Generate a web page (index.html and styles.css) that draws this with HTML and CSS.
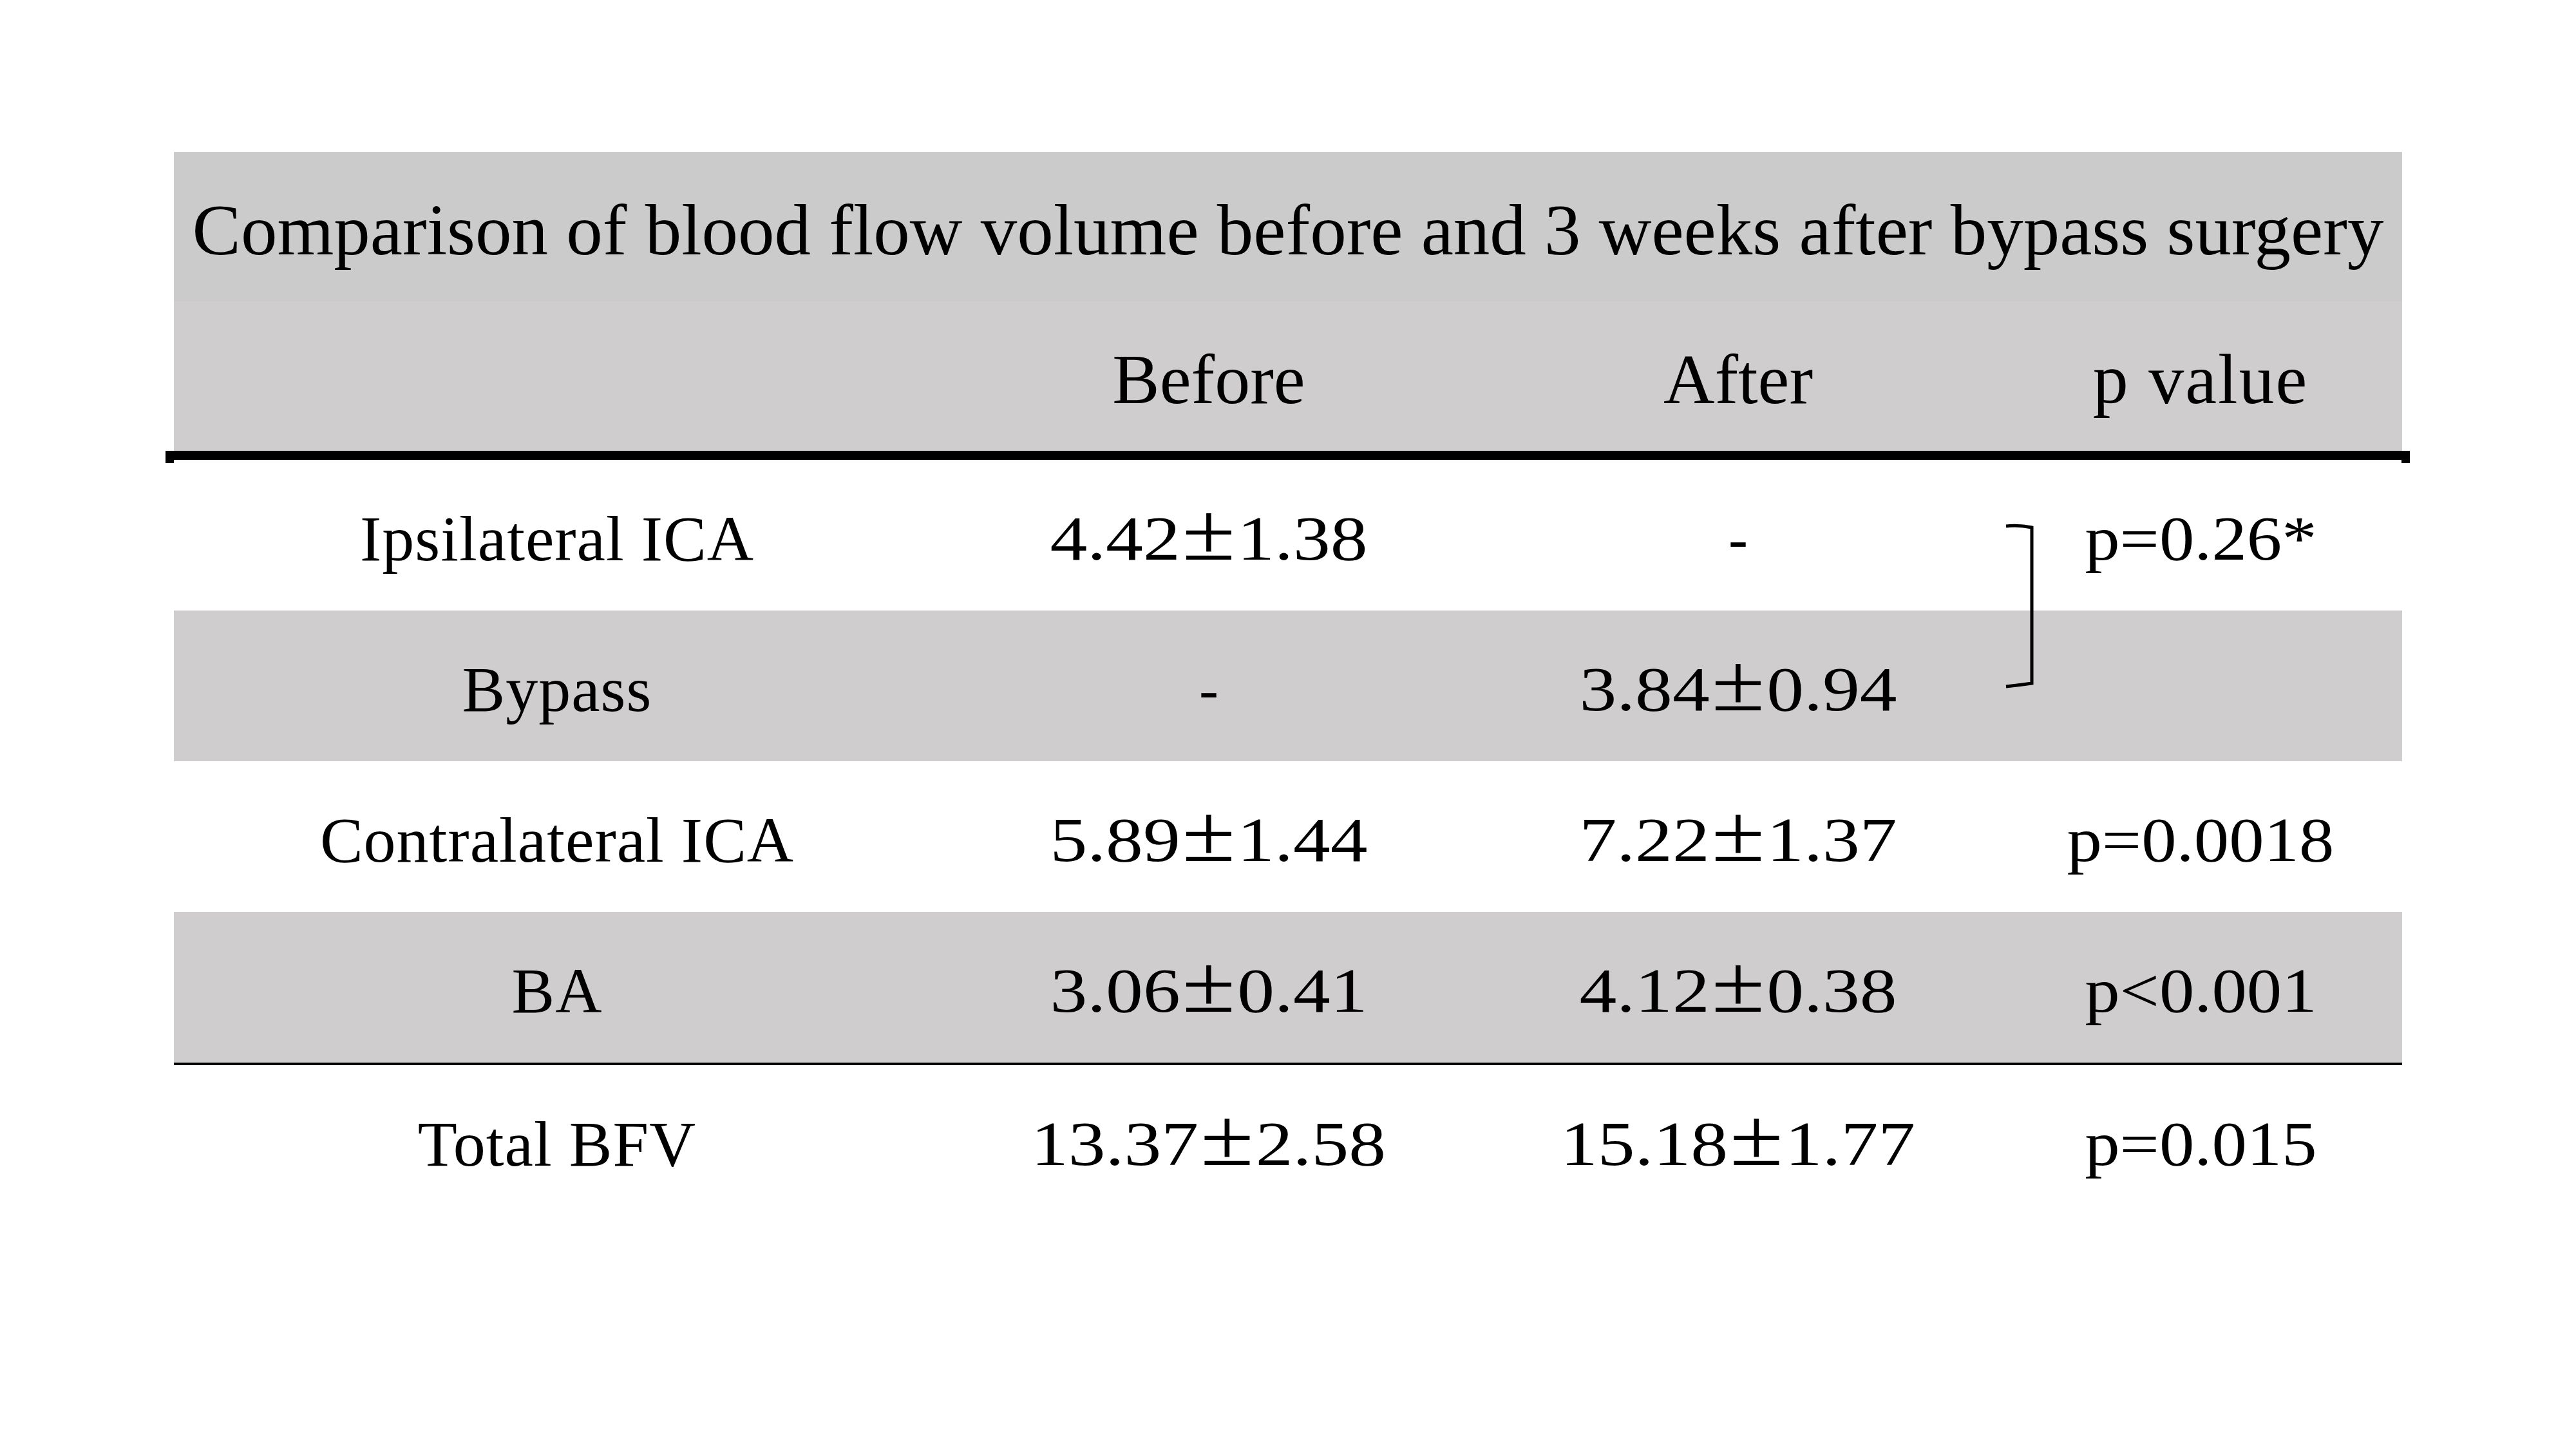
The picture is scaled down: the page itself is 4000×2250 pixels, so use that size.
FILE: index.html
```html
<!DOCTYPE html>
<html lang="en">
<head>
<meta charset="utf-8">
<title>Comparison of blood flow volume</title>
<link rel="stylesheet" href="styles.css">
</head>
<body>
<div class="page">
  <div class="table">
    <div class="title"><span>Comparison of blood flow volume before and 3 weeks after bypass surgery</span></div>
    <div class="row head">
      <div class="cell"></div>
      <div class="cell">Before</div>
      <div class="cell">After</div>
      <div class="cell pvh">p value</div>
    </div>
    <div class="rule-thick"></div>
    <div class="row">
      <div class="cell label">Ipsilateral ICA</div>
      <div class="cell"><span class="num">4.42<span class="pm">±</span>1.38</span></div>
      <div class="cell"><span class="dash">-</span></div>
      <div class="cell"><span class="pv">p=0.26*</span></div>
    </div>
    <div class="row gray">
      <div class="cell label">Bypass</div>
      <div class="cell"><span class="dash">-</span></div>
      <div class="cell"><span class="num">3.84<span class="pm">±</span>0.94</span></div>
      <div class="cell"></div>
    </div>
    <div class="row">
      <div class="cell label">Contralateral ICA</div>
      <div class="cell"><span class="num">5.89<span class="pm">±</span>1.44</span></div>
      <div class="cell"><span class="num">7.22<span class="pm">±</span>1.37</span></div>
      <div class="cell"><span class="pv">p=0.0018</span></div>
    </div>
    <div class="row gray">
      <div class="cell label">BA</div>
      <div class="cell"><span class="num">3.06<span class="pm">±</span>0.41</span></div>
      <div class="cell"><span class="num">4.12<span class="pm">±</span>0.38</span></div>
      <div class="cell"><span class="pv">p&lt;0.001</span></div>
    </div>
    <div class="rule-thin"></div>
    <div class="row">
      <div class="cell label">Total BFV</div>
      <div class="cell"><span class="num">13.37<span class="pm">±</span>2.58</span></div>
      <div class="cell"><span class="num">15.18<span class="pm">±</span>1.77</span></div>
      <div class="cell"><span class="pv">p=0.015</span></div>
    </div>
    <svg class="bracket" width="60" height="260" viewBox="0 0 60 260">
      <path d="M5 5 Q25 3 45 7 L45 249 Q25 252 5 254" fill="none" stroke="#000" stroke-width="5"/>
    </svg>
  </div>
</div>
</body>
</html>
```
FILE: styles.css
```css
html, body {
  margin: 0;
  padding: 0;
  background: #ffffff;
}

body {
  font-family: "Liberation Serif", "Times New Roman", serif;
  color: #000;
}

.page {
  width: 4000px;
  height: 2250px;
  padding: 236px 0 0 270px;
  box-sizing: border-box;
}

.table {
  position: relative;
  width: 3460px;
  display: flex;
  flex-direction: column;
}

.title {
  height: 232px;
  background: #cbcbcb;
  display: flex;
  align-items: center;
  justify-content: center;
  padding-top: 10px;
  box-sizing: border-box;
  font-size: 113px;
  white-space: nowrap;
}

.row {
  height: 234px;
  display: grid;
  grid-template-columns: 1190px 834px 810px 626px;
  background: #ffffff;
}

.row.gray {
  background: #cfcdce;
}

.row.head {
  height: 232px;
  background: #cfcdce;
  font-size: 110px;
}

.cell {
  display: flex;
  align-items: center;
  justify-content: center;
  padding-top: 10px;
  box-sizing: border-box;
  white-space: nowrap;
  font-size: inherit;
}

.row.head .cell.pvh {
  letter-spacing: 2px;
}

.row:not(.head) .cell {
  font-size: 98px;
}

.row .cell.label {
  font-size: 100px;
  letter-spacing: 1px;
}

.num {
  display: inline-block;
  transform: scaleX(1.18);
}

.pm {
  display: inline-block;
  font-size: 1.3em;
  line-height: 0;
  margin: 0 0.02em;
}

.pv {
  display: inline-block;
  transform: scaleX(1.11);
}

.dash {
  display: inline-block;
  font-size: 90px;
}

.rule-thick {
  position: relative;
  height: 14px;
  background: #000;
  margin: 0 -12px 0 -13px;
}

.rule-thick::before,
.rule-thick::after {
  content: "";
  position: absolute;
  top: 14px;
  width: 13px;
  height: 5px;
  background: #000;
}

.rule-thick::before {
  left: 0;
}

.rule-thick::after {
  right: 0;
}

.rule-thin {
  height: 4px;
  background: #000;
}

.bracket {
  position: absolute;
  left: 2840px;
  top: 576px;
}
```
